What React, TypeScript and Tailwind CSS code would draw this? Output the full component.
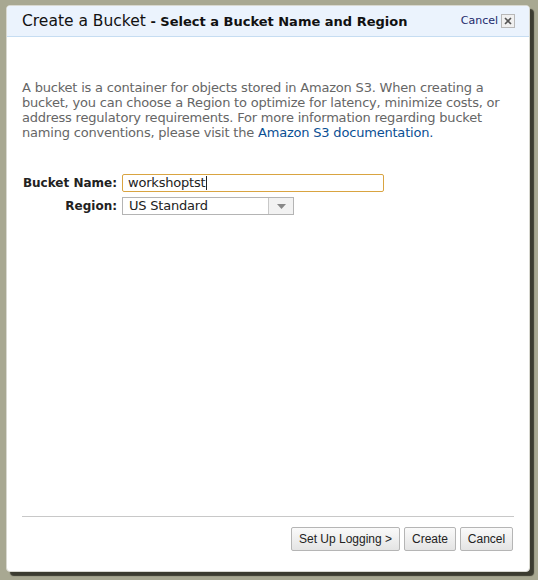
import React from 'react'

const verdana = { fontFamily: '"DejaVu Sans", Verdana, sans-serif' }

function FieldRow(props: { label: string; children: React.ReactNode }) {
  return (
    <div className="flex items-center">
      <div className="w-[100px] shrink-0 whitespace-nowrap pr-[5px] text-right text-[12px] font-bold text-[#222]">
        {props.label}
      </div>
      {props.children}
    </div>
  )
}

function Button(props: { label: string; width: string }) {
  return (
    <button
      className={`h-[24px] ${props.width} rounded-[2px] border border-[#b5b5b5] bg-gradient-to-b from-[#fafafa] to-[#e4e4e4] text-[12px] text-[#222]`}
      style={{ fontFamily: '"Liberation Sans", Arial, sans-serif' }}
    >
      {props.label}
    </button>
  )
}

export default function App() {
  return (
    <div className="h-[580px] w-[538px] bg-[#a8a892] pl-[6px] pt-[5px]" style={verdana}>
      <div className="flex h-[567px] w-[524px] flex-col overflow-hidden rounded-[4px] border border-[#d8d8d0] bg-white shadow-[4px_4px_1px_rgba(40,40,30,0.85)]">
        <div className="flex h-[31px] shrink-0 items-center border-b border-[#c6ddf2] bg-[#ebf3fd] pl-[15px] pr-[14px]">
          <div className="flex-1 whitespace-nowrap text-[#111]">
            <span className="text-[15.5px]">Create a Bucket</span>
            <span className="text-[13px] font-bold"> - Select a Bucket Name and Region</span>
          </div>
          <span className="mr-[3px] text-[11px] text-[#1b2a6b]">Cancel</span>
          <span className="flex h-[14px] w-[14px] items-center justify-center border border-[#b8b8b8] bg-[#f0f0f0]">
            <svg width="8" height="8" viewBox="0 0 8 8">
              <path d="M1 1L7 7M7 1L1 7" stroke="#555" strokeWidth="1.6" />
            </svg>
          </span>
        </div>

        <div className="flex flex-1 flex-col px-[15px]">
          <p className="mt-[43px] text-[13px] leading-[15px] tracking-[-0.2px] text-[#666]">
            A bucket is a container for objects stored in Amazon S3. When creating a bucket, you can choose a
            Region to optimize for latency, minimize costs, or address regulatory requirements. For more
            information regarding bucket naming conventions, please visit the{' '}
            <span className="text-[#0b4f94]">Amazon S3 documentation.</span>
          </p>

          <div className="mt-[34px] flex flex-col gap-[5px]">
            <FieldRow label="Bucket Name:">
              <div className="flex h-[18px] w-[262px] items-center rounded-[2px] border border-[#d9a441] px-[5px] text-[13px] tracking-[-0.2px] text-[#222]">
                workshoptst<span className="ml-[1px] h-[14px] w-px bg-[#222]" />
              </div>
            </FieldRow>
            <FieldRow label="Region:">
              <div className="flex h-[18px] w-[172px] items-center border border-[#b4b4b4] text-[13px] tracking-[-0.2px] text-[#222]">
                <span className="flex-1 pl-[6px]">US Standard</span>
                <span className="flex h-full w-[25px] items-center justify-center border-l border-[#c8c8c8] bg-[#f2f2f2]">
                  <svg width="9" height="5" viewBox="0 0 9 5">
                    <path d="M0 0H9L4.5 5Z" fill="#888" />
                  </svg>
                </span>
              </div>
            </FieldRow>
          </div>

          <div className="mt-auto mb-[20px] border-t border-[#c8c8c8] pt-[10px]">
            <div className="flex justify-end gap-[4px] pr-[1px]">
              <Button label="Set Up Logging >" width="w-[109px]" />
              <Button label="Create" width="w-[52px]" />
              <Button label="Cancel" width="w-[53px]" />
            </div>
          </div>
        </div>
      </div>
    </div>
  )
}
